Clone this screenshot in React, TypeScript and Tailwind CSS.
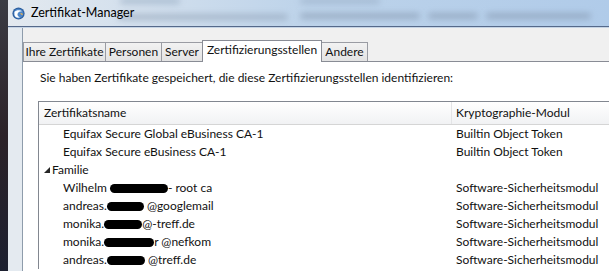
import React from 'react';

const font = { fontFamily: 'Lato, "Noto Sans", sans-serif' };

function Blob({ w }: { w: number }) {
  return <span className="inline-block h-[9px] rounded-full bg-black align-middle" style={{ width: w }} />;
}

const tabs = [
  { label: 'Ihre Zertifikate', w: 'w-[83px]' },
  { label: 'Personen', w: 'w-[57px]' },
  { label: 'Server', w: 'w-[42px]' },
  { label: 'Zertifizierungsstellen', w: 'w-[120px]', active: true },
  { label: 'Andere', w: 'w-[47px]' },
];

type Row = { name: React.ReactNode; mod: string; group?: boolean };

const rows: Row[] = [
  { name: 'Equifax Secure Global eBusiness CA-1', mod: 'Builtin Object Token' },
  { name: 'Equifax Secure eBusiness CA-1', mod: 'Builtin Object Token' },
  { name: 'Familie', mod: '', group: true },
  { name: <>Wilhelm <Blob w={58} />- root ca</>, mod: 'Software-Sicherheitsmodul' },
  { name: <>andreas.<Blob w={37} /> @googlemail</>, mod: 'Software-Sicherheitsmodul' },
  { name: <>monika.<Blob w={38} />@-treff.de</>, mod: 'Software-Sicherheitsmodul' },
  { name: <>monika.<Blob w={50} />r @nefkom</>, mod: 'Software-Sicherheitsmodul' },
  { name: <>andreas.<Blob w={38} /> @treff.de</>, mod: 'Software-Sicherheitsmodul' },
];

// blurred window content shining through the glass title bar
const glass = [
  { l: 'left-[112px]', t: 'top-[-2px]', w: 'w-[60px]', c: 'bg-[#8fa4bc]' },
  { l: 'left-[110px]', t: 'top-[14px]', w: 'w-[170px]', c: 'bg-[#8c9db2]' },
  { l: 'left-[292px]', t: 'top-[-2px]', w: 'w-[80px]', c: 'bg-[#93a8c0]' },
  { l: 'left-[292px]', t: 'top-[13px]', w: 'w-[120px]', c: 'bg-[#7f91a8]' },
  { l: 'left-[420px]', t: 'top-[13px]', w: 'w-[50px]', c: 'bg-[#7f91a8]' },
  { l: 'left-[478px]', t: 'top-[13px]', w: 'w-[105px]', c: 'bg-[#7f91a8]' },
];

export default function App() {
  return (
    <div className="flex w-[609px] h-[271px] overflow-hidden bg-[#2a2a30] text-[#111]" style={font}>
      {/* desktop strip */}
      <div className="w-[8px] shrink-0 bg-gradient-to-b from-[#3a3c44] via-[#2b2228] to-[#1c2030]" />

      {/* window */}
      <div className="flex flex-col flex-1 bg-[#dfe6ee]">
        {/* title bar */}
        <div className="relative h-[26px] shrink-0 bg-gradient-to-r from-[#e3e9ef] via-[#bdd3ea] to-[#b0cbe9] overflow-hidden">
          {glass.map((g, i) => (
            <div key={i} className={`absolute ${g.l} ${g.t} ${g.w} ${g.c} h-[6px] rounded-full blur-[3px] opacity-55`} />
          ))}
          <div className="relative flex items-center h-full pl-[4px] gap-[6px]">
            <svg width="13" height="13" viewBox="0 0 16 16">
              <circle cx="8" cy="8" r="7.5" fill="#2c5e9e" />
              <circle cx="8" cy="8" r="6" fill="#4d86c8" />
              <path d="M3 6 C5 3.5 10 3 13 5.5 C10.5 5 8 6 7 8 C6 10 7.5 12 10 12.5 C7 14 3.5 12.5 3 9.5 Z" fill="#fff" />
              <path d="M10 8 C11.5 7.5 13 8 13.5 9.5 C12 9.8 11 9.5 10 8 Z" fill="#f5b347" />
            </svg>
            <span className="text-[12.5px] text-black">Zertifikat-Manager</span>
          </div>
        </div>
        <div className="h-[1px] bg-[#55698a]" />
        <div className="h-[1px] bg-[#c6d4e4]" />

        <div className="flex flex-1">
          {/* left frame */}
          <div className="w-[14px] shrink-0 bg-[#e4eaf0]" />
          <div className="w-[1px] shrink-0 bg-[#8e9cab]" />

          {/* dialog content */}
          <div className="flex flex-col flex-1 bg-[#f0f0f0] pt-[12px]">
            {/* tabs */}
            <div className="flex items-end h-[21px] text-[12px] leading-none whitespace-nowrap">
              {tabs.map((t) =>
                t.active ? (
                  <div
                    key={t.label}
                    className={`${t.w} h-[22px] -mb-[1px] -ml-[1px] z-10 shrink-0 flex items-center justify-center bg-white border border-b-0 border-[#898c95] pb-[4px]`}
                  >
                    {t.label}
                  </div>
                ) : (
                  <div
                    key={t.label}
                    className={`${t.w} h-[19px] shrink-0 flex items-center justify-center bg-gradient-to-b from-[#f2f2f2] to-[#e3e3e3] border border-b-0 border-[#9a9ca3] -ml-[1px] first:ml-0`}
                  >
                    {t.label}
                  </div>
                )
              )}
            </div>

            {/* panel */}
            <div className="flex-1 bg-white border-t border-[#898c95] pl-[15px] pt-[7px]">
              <div className="text-[12px] h-[18px] leading-[18px] pl-[2px] whitespace-nowrap">
                Sie haben Zertifikate gespeichert, die diese Zertifizierungsstellen identifizieren:
              </div>
              <div className="mt-[14px] border-l border-t border-[#828790] text-[12px]">
                <div className="flex h-[23px] bg-gradient-to-b from-white to-[#f1f2f4] border-b border-[#d5d5d5]">
                  <div className="w-[413px] flex items-center pl-[5px] border-r border-[#e3e4e6]">Zertifikatsname</div>
                  <div className="flex-1 flex items-center pl-[4px]">Kryptographie-Modul</div>
                </div>
                {rows.map((r, i) => (
                  <div key={i} className="flex h-[18px] leading-[18px] whitespace-nowrap">
                    <div className={`w-[413px] ${r.group ? 'pl-[5px]' : 'pl-[24px]'} flex items-center`}>
                      {r.group && (
                        <svg width="6" height="6" viewBox="0 0 6 6" className="mr-[2px]">
                          <polygon points="6,0 6,6 0,6" fill="#262626" />
                        </svg>
                      )}
                      <span>{r.name}</span>
                    </div>
                    <div className="flex-1 pl-[4px]">{r.mod}</div>
                  </div>
                ))}
              </div>
            </div>
          </div>
        </div>
      </div>
    </div>
  );
}
